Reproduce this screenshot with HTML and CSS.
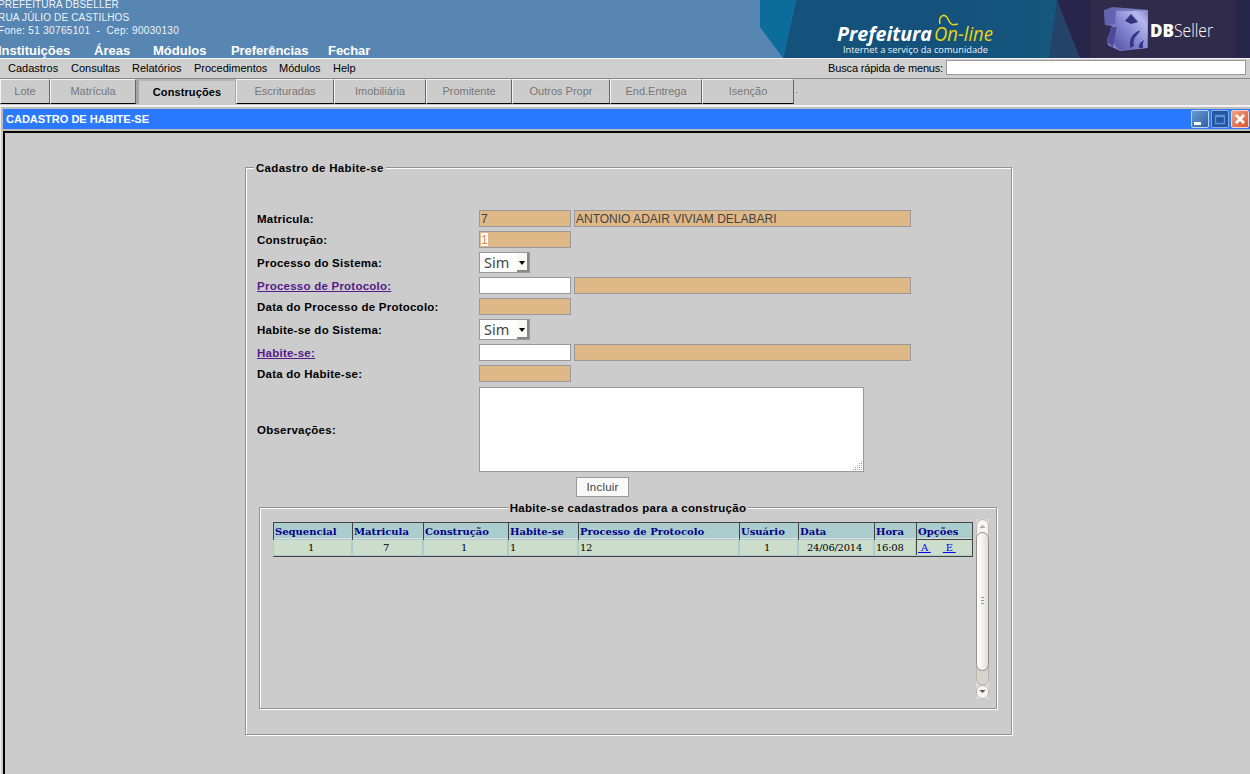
FILE: index.html
```html
<!DOCTYPE html>
<html lang="pt-BR">
<head>
<meta charset="utf-8">
<title>Cadastro de Habite-se</title>
<link rel="stylesheet" href="styles.css">
</head>
<body>
<header class="banner">
  <div class="org">
    <div class="org-info"><p class="o1">PREFEITURA DBSELLER</p><p class="o2">RUA JÚLIO DE CASTILHOS</p><p class="o3">Fone: 51 30765101 &nbsp;- &nbsp;Cep: 90030130</p></div>
    <nav class="main-nav"><a class="n1">Instituições</a><a class="n2">Áreas</a><a class="n3">Módulos</a><a class="n4">Preferências</a><a class="n5">Fechar</a></nav>
  </div>
  <svg class="brand" width="490" height="58" viewBox="0 0 490 58">
    <defs>
      <linearGradient id="sea" x1="0" x2="1"><stop offset="0" stop-color="#14527b"/><stop offset=".6" stop-color="#14527b"/><stop offset="1" stop-color="#17587e"/></linearGradient>
      <linearGradient id="cube" x1="0" y1="0" x2="1" y2="1"><stop offset="0" stop-color="#5c5aa6"/><stop offset=".5" stop-color="#8a8bd0"/><stop offset="1" stop-color="#6a68b8"/></linearGradient>
      <linearGradient id="side" x1="0" y1="1" x2="1" y2="0"><stop offset="0" stop-color="#5451a4"/><stop offset=".45" stop-color="#8486d2"/><stop offset=".8" stop-color="#b4b9ec"/><stop offset="1" stop-color="#8583cb"/></linearGradient>
    </defs>
    <path d="M36 0H310V58H23Z" fill="url(#sea)"/>
    <path d="M0 0H36L23 58L0 27Z" fill="#0c6c9c"/>
    <path d="M297 0H330V58H289Z" fill="#25426a"/>
    <path d="M297 0H490V58H320Z" fill="#28254a"/>
    <rect x="330" width="146" height="58" fill="#302b4a"/>
    <text x="77" y="41" class="logo-pref" textLength="95" lengthAdjust="spacingAndGlyphs">Prefeitura</text>
    <text x="174" y="41" class="logo-on" textLength="59" lengthAdjust="spacingAndGlyphs">On-line</text>
    <path d="M180 24C178 16 185 12 188 19S193 25 198 24" fill="none" stroke="#e8d516" stroke-width="1.500"/>
    <text x="83" y="52.500" class="logo-tag" textLength="145" lengthAdjust="spacingAndGlyphs">Internet a serviço da comunidade</text>
    <path d="M344 10L352 7L388 10V48L360 51L348 45L347 40L352 26L345 25Z" fill="url(#cube)"/>
    <path d="M356 11L388 11L387 48L360 50Q350 44 357 32Q361 24 356 20Z" fill="url(#side)"/>
    <path d="M371 14L378 22L371 24L365 21Z" fill="#342f79"/>
    <path d="M344 10L355 11V24L345 25Z" fill="#6462ae"/>
    <path d="M351 27L357 27L353 47L347 42Z" fill="#4d4a99"/>
    <path d="M370 48Q368 36 378 31Q382 30 377 35Q372 40 374 46ZM379 48Q378 43 384 40Q382 44 383 48Z" fill="#38358a"/>
    <text x="390" y="37" class="logo-db" textLength="24" lengthAdjust="spacingAndGlyphs">DB</text>
    <text x="414" y="37" class="logo-seller" textLength="39" lengthAdjust="spacingAndGlyphs">Seller</text>
  </svg>
</header>
<div class="menubar">
  <nav class="submenu"><a class="s1">Cadastros</a><a class="s2">Consultas</a><a class="s3">Relatórios</a><a class="s4">Procedimentos</a><a class="s5">Módulos</a><a class="s6">Help</a></nav>
  <label class="quick"><span>Busca rápida de menus:</span><input type="text"></label>
</div>
<div class="tabs">
  <div class="tab t1">Lote</div><div class="tab t2">Matrícula</div><div class="tab t3 active">Construções</div><div class="tab t4">Escrituradas</div><div class="tab t5">Imobiliária</div><div class="tab t6">Promitente</div><div class="tab t7">Outros Propr</div><div class="tab t8">End.Entrega</div><div class="tab t9">Isenção</div><i class="dot"></i>
</div>
<section class="window">
  <div class="titlebar"><h1>CADASTRO DE HABITE-SE</h1>
    <div class="controls">
      <svg width="18" height="18" viewBox="0 0 18 18"><defs><linearGradient id="b" x2="1" y2="1"><stop stop-color="#6a9ad0"/><stop offset="1" stop-color="#2c62a6"/></linearGradient></defs><rect x=".5" y=".5" width="17" height="17" rx="1.500" fill="url(#b)" stroke="#b9d0f0"/><path d="M3 12h7v3H3z" fill="#fff"/></svg>
      <svg width="18" height="18" viewBox="0 0 18 18"><rect x=".5" y=".5" width="17" height="17" rx="1.500" fill="#2455a0" stroke="#86aee4"/><path d="M4.500 5.500h9v8h-9zM4 6.500h10" fill="none" stroke="#5d93db" stroke-width="1.300"/></svg>
      <svg width="18" height="18" viewBox="0 0 18 18"><defs><linearGradient id="r" x2="1" y2="1"><stop stop-color="#f0a58c"/><stop offset="1" stop-color="#d6532c"/></linearGradient></defs><rect x=".5" y=".5" width="17" height="17" rx="1.500" fill="url(#r)" stroke="#f4d3cc"/><path d="M5 5l8 8M13 5l-8 8" stroke="#fff" stroke-width="2.600"/></svg>
    </div>
  </div>
  <main class="content">
    <div class="group outer">
      <div class="legend">Cadastro de Habite-se</div>
      <form class="form">
        <label>Matricula:</label><div class="fields"><div class="box ro small">7</div><div class="box ro wide">ANTONIO ADAIR VIVIAM DELABARI</div></div>
        <label>Construção:</label><div class="fields"><div class="box ro small"><mark>1</mark></div></div>
        <label>Processo do Sistema:</label><div class="fields"><div class="select"><span>Sim</span><i></i></div></div>
        <a class="link">Processo de Protocolo:</a><div class="fields"><div class="box small"></div><div class="box ro wide"></div></div>
        <label>Data do Processo de Protocolo:</label><div class="fields"><div class="box ro small"></div></div>
        <label>Habite-se do Sistema:</label><div class="fields"><div class="select"><span>Sim</span><i></i></div></div>
        <a class="link">Habite-se:</a><div class="fields"><div class="box small"></div><div class="box ro wide"></div></div>
        <label>Data do Habite-se:</label><div class="fields"><div class="box ro small"></div></div>
        <label>Observações:</label><div class="memo"><svg width="10" height="10" viewBox="0 0 10 10"><path d="M8 0h1v1H8zM6 2h1v1H6zM8 2h1v1H8zM4 4h1v1H4zM6 4h1v1H6zM8 4h1v1H8zM2 6h1v1H2zM4 6h1v1H4zM6 6h1v1H6zM8 6h1v1H8zM0 8h1v1H0zM2 8h1v1H2zM4 8h1v1H4zM6 8h1v1H6zM8 8h1v1H8z" fill="#a0a0a0"/></svg></div>
      </form>
      <button class="submit" type="button">Incluir</button>
      <div class="group inner">
        <div class="legend">Habite-se cadastrados para a construção</div>
        <div class="list">
          <div class="table">
            <div class="row head"><b>Sequencial</b><b>Matricula</b><b>Construção</b><b>Habite-se</b><b>Processo de Protocolo</b><b>Usuário</b><b>Data</b><b>Hora</b><b>Opções</b></div>
            <div class="row data"><span class="c">1</span><span class="c">7</span><span class="c">1</span><span>1</span><span>12</span><span class="c">1</span><span class="c">24/06/2014</span><span>16:08</span><span class="ops"><a>&nbsp;A&nbsp;</a><a>&nbsp;E&nbsp;</a></span></div>
          </div>
          <svg class="scroll" width="13" height="180" viewBox="0 0 13 180">
            <defs><linearGradient id="th"><stop stop-color="#fff"/><stop offset=".4" stop-color="#f6f6f4"/><stop offset="1" stop-color="#dddcd9"/></linearGradient></defs>
            <rect width="13" height="180" fill="#dddbd6"/>
            <rect x=".5" y=".5" width="12" height="20" rx="6" fill="#f4f4f2" stroke="#b9b6b0"/>
            <rect x=".5" y="140" width="12" height="26" rx="6" fill="#d6d4cf" stroke="#b9b6b0"/>
            <rect x=".5" y="166.500" width="12" height="13" rx="5.500" fill="#f4f4f2" stroke="#b9b6b0"/>
            <rect x=".5" y="13.500" width="12" height="138" rx="6" fill="url(#th)" stroke="#938f89"/>
            <path d="M3.500 9L6.500 6L9.500 9Z" fill="#aaa"/><path d="M3.500 171H9.500L6.500 174Z" fill="#555"/>
            <path d="M5 78.500h3M5 81.500h3M5 84.500h3" stroke="#999"/>
          </svg>
        </div>
      </div>
    </div>
  </main>
</section>
</body>
</html>
```

FILE: styles.css
```css
* { box-sizing: border-box; }
body { margin: 0; width: 1250px; height: 774px; overflow: hidden; background: #ccc; font: 11px "Liberation Sans", Arial, sans-serif; color: #000; display: flex; flex-direction: column; }
p, h1 { margin: 0; }
.banner { height: 58px; flex: none; background: #5786b2; display: flex; justify-content: space-between; overflow: hidden; }
.org { width: 500px; margin-left: -2px; color: #fff; white-space: nowrap; }
.org-info { font-size: 10px; line-height: 13px; height: 43px; margin-top: -2px; color: #eef4fa; }
.o1, .o2 { letter-spacing: .16px; }
.o3 { letter-spacing: .33px; }
.main-nav { display: flex; font: bold 13px/16px "Liberation Sans", Arial, sans-serif; padding-top: 2px; }
.n1 { width: 96px; } .n2 { width: 59px; } .n3 { width: 78px; } .n4 { width: 97px; }
.n4, .n5 { letter-spacing: -.06px; }
.brand { flex: none; }
.logo-pref { font: italic bold 20px "Open Sans", sans-serif; fill: #fff; }
.logo-on { font: italic 20px "Open Sans", sans-serif; fill: #e8d516; }
.logo-tag { font: 9.500px "Open Sans", sans-serif; fill: #e8f0f6; }
.logo-db { font: 800 18px "Open Sans", sans-serif; fill: #fff; }
.logo-seller { font: 300 18px "Open Sans", sans-serif; fill: #fff; }
.menubar { height: 21px; flex: none; display: flex; justify-content: space-between; background: #cfcfcf; border-top: 1px solid #f4f4f4; border-bottom: 1px solid #888; padding: 0 4px 0 8px; white-space: nowrap; }
.submenu { display: flex; line-height: 19px; }
.s1 { width: 63px; } .s2 { width: 61px; } .s3 { width: 62px; } .s4 { width: 85px; } .s5 { width: 54px; }
.quick { display: flex; line-height: 16px; padding-top: 1px; gap: 3px; letter-spacing: -.17px; }
.quick input { width: 300px; height: 15px; border: 1px solid #999; background: #fff; padding: 0; }
.tabs { height: 26px; flex: none; display: flex; }
.tab { height: 25px; border-top: 1px solid #f2f2f2; border-left: 1px solid #f5f5f5; border-right: 1px solid #666; border-bottom: 1px solid #000; color: #777; text-align: center; line-height: 23px; white-space: nowrap; }
.tab.active { border: 0; border-left: 3px solid #a5a5a5; border-top: 2px solid #b5b5b5; border-right: 1px solid #aaa; color: #000; font-weight: bold; line-height: 22px; letter-spacing: .1px; }
.t1 { width: 50px; } .t2 { width: 86px; } .t3 { width: 100px; } .t4 { width: 98px; } .t5 { width: 92px; } .t6 { width: 86px; } .t7 { width: 98px; } .t8 { width: 92px; } .t9 { width: 92px; }
.dot { width: 1px; height: 1px; background: #fff; box-shadow: 1px 1px #777; margin: 12px 0 0 1px; }
.window { flex: 1; border-top: 2px solid #f2f2f2; border-left: 1px solid #eee; }
.titlebar { height: 24px; border: 2px solid #bdbdbd; border-right: 0; background: #2a79ff; background-clip: padding-box; display: flex; justify-content: space-between; padding: 1px 1px 0 3px; }
.titlebar h1 { font-size: 11px; line-height: 18px; color: #fff; }
.controls { display: flex; gap: 2px; }
.content { margin-left: 2px; height: 645px; border: 2px solid #000; border-width: 2px 0 0 2px; padding: 34px 0 0 240px; }
.group { border: 1px solid #939393; box-shadow: inset 1px 1px #fff, 1px 1px #fff; display: flex; flex-direction: column; align-items: flex-start; }
.outer { width: 767px; height: 568px; }
.legend { background: #ccc; font-weight: bold; font-size: 11.500px; letter-spacing: .3px; line-height: 14px; height: 14px; padding: 0 2px; white-space: nowrap; margin: -7px 0 0 8px; }
.form { margin: 35px 0 0 11px; display: grid; grid-template-columns: 222px 385px; row-gap: 4px; align-items: center; font-weight: bold; font-size: 11.500px; line-height: 13px; letter-spacing: .24px; white-space: nowrap; }
.form label, .link { padding-top: 2px; }
.link { color: #551a8b; text-decoration: underline; }
.fields { display: flex; gap: 3px; letter-spacing: 0; }
.box { height: 17px; border: 1px solid #999; background: #fff; font-weight: normal; font-size: 12px; line-height: 16px; padding-left: 1px; color: #444; }
.box.ro { background: #deb887; }
.small { width: 92px; flex: none; }
.wide { width: 337px; flex: none; }
mark { display: inline-block; height: 13px; line-height: 14px; margin-top: 1px; background: #fff; color: #f08040; vertical-align: top; }
.select { width: 51px; height: 21px; border: 1px solid #999; background: #fff; display: flex; justify-content: space-between; font: 14.500px/18px "Noto Sans", sans-serif; color: #444; padding-left: 4px; }
.select i { width: 12px; border-right: 2px solid #888; border-bottom: 2px solid #888; background: #f8f8f6; display: flex; align-items: center; justify-content: center; }
.select i::after { content: ""; border: 3px solid transparent; border-top: 4px solid #000; border-bottom: 0; margin-top: 2px; }
.memo { margin-top: 1px; width: 385px; height: 85px; border: 1px solid #999; background: #fff; display: flex; justify-content: flex-end; align-items: flex-end; }
.submit { width: 53px; height: 20px; margin: 5px 0 0 330px; padding: 0; border: 1px solid #999; background: #f9f9f7; color: #444; font: 11.500px "Liberation Sans", Arial, sans-serif; letter-spacing: .2px; }
.inner { width: 738px; height: 202px; margin: 10px 0 0 13px; }
.inner .legend { align-self: center; margin-left: 0; }
.list { display: flex; gap: 3px; margin: 4px 0 0 13px; }
.table { width: 700px; height: 35px; margin-top: 3px; border-right: 1px solid #444; border-bottom: 1px solid #444; background: #accdcd; font: 10px "DejaVu Serif", serif; white-space: nowrap; }
.row { display: grid; grid-template-columns: 79px 71px 85px 70px 161px 59px 76px 42px 56px; }
.head { height: 17px; border-bottom: 1px solid #ddd; }
.head b { border-top: 1px solid #444; border-left: 1px solid #444; color: #00008b; padding-left: 1px; line-height: 17px; }
.data { height: 17px; line-height: 15px; letter-spacing: -.25px; }
.data span { margin: 1px; height: 15px; background: #cdc; padding-left: 1px; }
.data .c { text-align: center; padding: 0 3px 0 0; }
.data .ops { margin: 0; height: 16px; border: 1px solid #444; border-width: 1px 0 0 1px; display: flex; gap: 12px; }
.ops a { color: #00e; text-decoration: underline; }
```
